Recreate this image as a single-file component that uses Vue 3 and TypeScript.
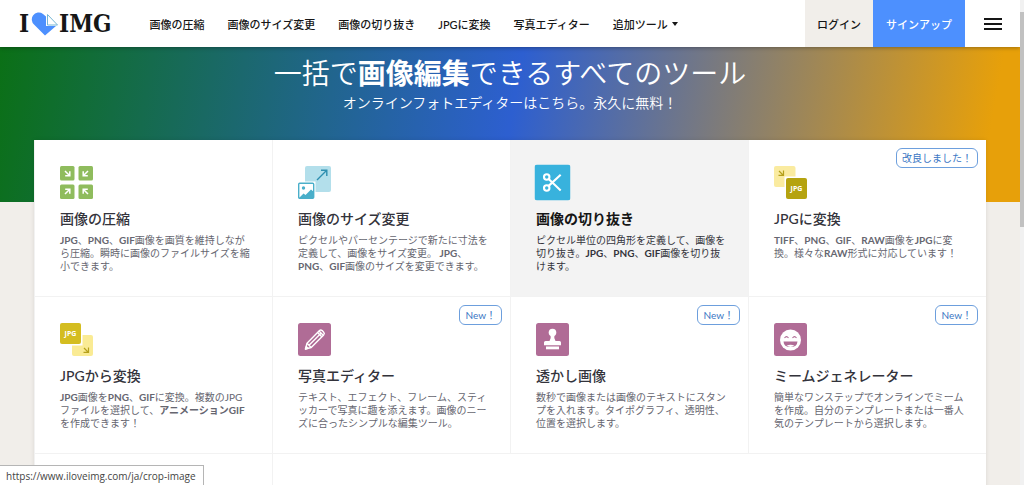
<script setup lang="ts">
interface Tool {
  icon: string
  title: string
  text: string
  badge?: string
  active?: boolean
}

interface Segment {
  text: string
  bold: boolean
}

const links: string[] = ['画像の圧縮', '画像のサイズ変更', '画像の切り抜き', 'JPGに変換', '写真エディター']

const tools: Tool[] = [
  {
    icon: 'compress',
    title: '画像の圧縮',
    text: '**JPG**、**PNG**、**GIF**画像を画質を維持しなが\nら圧縮。瞬時に画像のファイルサイズを縮\n小できます。',
  },
  {
    icon: 'resize',
    title: '画像のサイズ変更',
    text: 'ピクセルやパーセンテージで新たに寸法を\n定義して、画像をサイズ変更。 **JPG**、\n**PNG**、**GIF**画像のサイズを変更できます。',
  },
  {
    icon: 'crop',
    title: '画像の切り抜き',
    text: 'ピクセル単位の四角形を定義して、画像を\n切り抜き。**JPG**、**PNG**、**GIF**画像を切り抜\nけます。',
    active: true,
  },
  {
    icon: 'to-jpg',
    title: 'JPGに変換',
    text: '**TIFF**、**PNG**、**GIF**、**RAW**画像を**JPG**に変\n換。様々な**RAW**形式に対応しています！',
    badge: '改良しました！',
  },
  {
    icon: 'from-jpg',
    title: 'JPGから変換',
    text: '**JPG**画像を**PNG**、**GIF**に変換。複数のJPG\nファイルを選択して、**アニメーションGIF**\nを作成できます！',
  },
  {
    icon: 'editor',
    title: '写真エディター',
    text: 'テキスト、エフェクト、フレーム、スティ\nッカーで写真に趣を添えます。画像のニー\nズに合ったシンプルな編集ツール。',
    badge: 'New！',
  },
  {
    icon: 'watermark',
    title: '透かし画像',
    text: '数秒で画像または画像のテキストにスタン\nプを入れます。タイポグラフィ、透明性、\n位置を選択します。',
    badge: 'New！',
  },
  {
    icon: 'meme',
    title: 'ミームジェネレーター',
    text: '簡単なワンステップでオンラインでミーム\nを作成。自分のテンプレートまたは一番人\n気のテンプレートから選択します。',
    badge: 'New！',
  },
]

function segments(text: string): Segment[] {
  return text
    .split('**')
    .map((part, index) => ({ text: part, bold: index % 2 === 1 }))
    .filter((part) => part.text !== '')
}
</script>

<template>
  <div class="page">
    <header class="header">
      <a href="#" class="logo" aria-label="I love IMG">
        <span>I</span>
        <svg class="heart" viewBox="0 0 28 24" aria-hidden="true">
          <path d="M14 23.500 3 12.500A7 7 0 0 1 2 3.500 7 7 0 0 1 12 2L15 4.500 15 14 25 14Z" fill="#4d90fe" />
          <path d="M16.500 2.500V13H26.500Z" fill="#fff" stroke="#76b6d4" stroke-width="1" stroke-linejoin="round" />
        </svg>
        <span>IMG</span>
      </a>
      <nav class="nav">
        <a v-for="link in links" :key="link" href="#">{{ link }}</a>
        <button type="button" class="more">追加ツール<span class="caret"></span></button>
      </nav>
      <div class="account">
        <a href="#" class="login">ログイン</a>
        <a href="#" class="signup">サインアップ</a>
        <button type="button" class="menu" aria-label="メニュー">
          <span></span><span></span><span></span>
        </button>
      </div>
    </header>

    <main class="main">
      <section class="hero">
        <h1>一括で<strong>画像編集</strong>できるすべてのツール</h1>
        <p>オンラインフォトエディターはこちら。永久に無料！</p>
      </section>

      <section class="tools">
        <a v-for="tool in tools" :key="tool.title" href="#" class="tool" :class="{ active: tool.active }">
          <svg class="icon" viewBox="0 0 33 33" aria-hidden="true">
            <template v-if="tool.icon === 'compress'">
              <g fill="#8fbc5d">
                <rect width="14.500" height="14.500" rx="1.500" />
                <rect x="18.500" width="14.500" height="14.500" rx="1.500" />
                <rect y="18.500" width="14.500" height="14.500" rx="1.500" />
                <rect x="18.500" y="18.500" width="14.500" height="14.500" rx="1.500" />
              </g>
              <g fill="none" stroke="#fff" stroke-width="1.500">
                <path d="M5 5 9.500 9.500M9.800 5.200V9.800H5.200" />
                <path d="M28 5 23.500 9.500M23.200 5.200V9.800H27.800" />
                <path d="M5 28 9.500 23.500M9.800 27.800V23.200H5.200" />
                <path d="M28 28 23.500 23.500M23.200 27.800V23.200H27.800" />
              </g>
            </template>
            <template v-else-if="tool.icon === 'resize'">
              <rect x="7" width="26" height="26" rx="2" fill="#b3dfeb" />
              <path d="M19 14 28.500 4.500M23 4.200H28.800V10" fill="none" stroke="#2e8fb0" stroke-width="1.400" />
              <rect x="-1" y="15.500" width="18.500" height="18.500" fill="#fff" />
              <rect x=".7" y="17.200" width="15" height="15" rx="1" fill="#fff" stroke="#4aafca" stroke-width="1.400" />
              <circle cx="5.500" cy="22" r="1.700" fill="#4aafca" />
              <path d="M1 32 5.500 27.500 7.500 29 13 23.500 16 26V32Z" fill="#4aafca" />
            </template>
            <template v-else-if="tool.icon === 'crop'">
              <rect width="33" height="33" rx="2.500" fill="#38b2dd" />
              <g fill="none" stroke="#fff" stroke-width="1.900">
                <circle cx="11.200" cy="11.500" r="2.500" />
                <circle cx="11.200" cy="21.500" r="2.500" />
                <path d="M13 13.400 24 23.800M13 19.600 24 9.400" />
              </g>
            </template>
            <template v-else-if="tool.icon === 'to-jpg'">
              <rect width="21.500" height="21" rx="2" fill="#faeba0" />
              <path d="M5 5 9 9M9.500 4.500V9.300H4.500" fill="none" stroke="#b5a01b" stroke-width="1.200" />
              <rect x="10.500" y="10.500" width="23" height="23" fill="#fff" />
              <rect x="12" y="12" width="21" height="21" rx="2" fill="#b5a30f" />
              <text x="22.500" y="25" class="jpg">JPG</text>
            </template>
            <template v-else-if="tool.icon === 'from-jpg'">
              <rect x="12" y="12" width="21" height="21" rx="2" fill="#faeb94" />
              <path d="M24 25 28 29M28.500 24.500V29.300H23.500" fill="none" stroke="#b5a01b" stroke-width="1.200" />
              <rect x="-1" y="-1" width="23.500" height="23.500" fill="#fff" />
              <rect width="21" height="21" rx="2" fill="#d4bd20" />
              <text x="10.500" y="13.200" class="jpg">JPG</text>
            </template>
            <template v-else>
              <rect width="33" height="33" rx="2.500" fill="#b06c96" />
              <g v-if="tool.icon === 'editor'" fill="none" stroke="#fff" stroke-width="1.400" stroke-linejoin="round">
                <path d="M7.500 26 9 20.300 21.500 7.500Q22.800 6.500 24.200 7.600L25.700 9.200Q26.900 10.500 25.700 11.900L13.200 24.500Z" />
                <path d="M9 20.300 13.200 24.500M11 22.200 23.500 9.700M19.500 9.500 23.800 13.800M21 8 25.200 12.200" />
                <path d="M7.500 26 8.200 23.600 9.800 25.300Z" fill="#fff" />
              </g>
              <g v-else-if="tool.icon === 'watermark'" fill="#fff">
                <circle cx="16.500" cy="9.500" r="3.800" />
                <path d="M14.500 11H18.500L18.300 15 19.500 18H23.500Q25 18 25 19.500V22.300H8V19.500Q8 18 9.500 18H13.500L14.700 15Z" />
                <rect x="10" y="23.500" width="13" height="2.800" />
              </g>
              <g v-else>
                <circle cx="16.500" cy="17" r="10.500" fill="#fff" />
                <path d="M9.500 18.500H23.500Q23.200 24 16.500 24T9.500 18.500Z" fill="#b06c96" />
                <path d="M12.500 22.800Q16.500 20.500 20.500 22.800 16.500 25 12.500 22.800Z" fill="#fff" />
                <path d="M10.500 15Q12.500 12.300 14.500 15M18.500 15Q20.500 12.300 22.500 15" fill="none" stroke="#b06c96" stroke-width="1.100" />
              </g>
            </template>
          </svg>
          <h2>{{ tool.title }}</h2>
          <p>
            <template v-for="(part, index) in segments(tool.text)" :key="index"><strong v-if="part.bold">{{ part.text }}</strong><template v-else>{{ part.text }}</template></template>
          </p>
          <span v-if="tool.badge" class="badge">{{ tool.badge }}</span>
        </a>
        <div class="tool"></div>
        <div class="tool wide"></div>
      </section>
    </main>

    <div class="scrollbar" aria-hidden="true"><div class="thumb"></div></div>
    <div class="status">https://www.iloveimg.com/ja/crop-image</div>
  </div>
</template>

<style>
body {
  margin: 0;
  background: #f1eeea;
}
</style>

<style scoped>
.page {
  position: relative;
  height: 100vh;
  overflow: hidden;
  box-sizing: border-box;
  padding-right: 4px;
  color: #33333b;
  font-family: Lato, "Noto Sans CJK JP", sans-serif;
  font-size: 11px;
}

a {
  color: inherit;
  text-decoration: none;
}

button {
  padding: 0;
  border: 0;
  background: none;
  color: inherit;
  font: inherit;
}

.header {
  position: relative;
  z-index: 1;
  display: flex;
  align-items: stretch;
  height: 47px;
  background: #fff;
  box-shadow: 0 1px 4px rgba(0, 0, 0, 0.3);
  color: #161616;
  font-weight: 500;
  white-space: nowrap;
}

.logo {
  display: flex;
  align-items: center;
  margin: 0 38px 0 19px;
  font: bold 24px "DejaVu Serif Condensed", "DejaVu Serif", serif;
}

.heart {
  width: 28px;
  height: 24px;
  margin: 0 0 0 2px;
}

.nav {
  display: flex;
  align-items: center;
  gap: 23px;
}

.more {
  display: flex;
  align-items: center;
  gap: 4px;
}

.caret {
  border: 3px solid transparent;
  border-top: 4px solid #161616;
  border-bottom: 0;
}

.account {
  display: flex;
  margin-left: auto;
}

.login,
.signup {
  display: flex;
  align-items: center;
  padding: 0 12px;
  background: #f1eeea;
}

.signup {
  padding: 0 13px;
  background: #4d90fe;
  color: #fff;
}

.menu {
  display: flex;
  flex-direction: column;
  align-items: center;
  justify-content: center;
  gap: 3px;
  width: 55px;
}

.menu span {
  width: 18px;
  height: 2px;
  background: #161616;
}

.main {
  background: linear-gradient(100deg, #0b7016 0%, #2d5fd0 50%, #e7a00a 96%) no-repeat 0 0 / 100% 155px;
}

.hero {
  height: 93px;
  box-sizing: border-box;
  padding-top: 8px;
  color: #fff;
  text-align: center;
}

h1 {
  margin: 0;
  font-size: 28px;
  font-weight: 350;
  line-height: 36px;
}

h1 strong {
  font-weight: 700;
}

.hero p {
  margin: 2px 0 0;
  font-size: 14px;
  font-weight: 350;
  line-height: 20px;
}

.tools {
  display: grid;
  grid-template-columns: repeat(4, 1fr);
  grid-auto-rows: minmax(157px, auto);
  margin: 0 34px;
  background: #fff;
  box-shadow: 0 0 4px rgba(0, 0, 0, 0.1);
}

.tool {
  position: relative;
  box-sizing: border-box;
  padding: 26px 20px 20px 25px;
  border-left: 1px solid #f2f2f2;
  border-bottom: 1px solid #f2f2f2;
}

.wide {
  grid-column: span 3;
}

.active {
  background: #f3f3f3;
  color: #161616;
}

.icon {
  display: block;
  width: 33px;
  height: 33px;
}

.active .icon {
  transform: scale(1.09);
}

.jpg {
  fill: #fff;
  font: bold 7px "Open Sans", sans-serif;
  text-anchor: middle;
}

h2 {
  margin: 10px 0 5px;
  font-size: 14px;
  font-weight: 500;
  line-height: 20px;
}

.active h2 {
  font-weight: 700;
}

.tool p {
  margin: 0;
  color: #666670;
  font-size: 10px;
  line-height: 13px;
  white-space: pre-line;
}

.active p {
  color: #33333b;
}

.badge {
  position: absolute;
  top: 8px;
  right: 8px;
  padding: 0 5px;
  border: 1px solid #6d9fdd;
  border-radius: 6px;
  background: #fff;
  color: #3c77c4;
  font-size: 10px;
  line-height: 18px;
}

.scrollbar {
  position: absolute;
  top: 0;
  right: 0;
  bottom: 0;
  z-index: 2;
  width: 4px;
  box-sizing: border-box;
  padding-top: 12px;
  background: #f1f1f1;
}

.thumb {
  height: 215px;
  background: #c1c1c1;
}

.status {
  position: absolute;
  bottom: 0;
  left: 0;
  z-index: 2;
  padding: 2px 7px 1px 6px;
  border: 1px solid #b5b5b5;
  border-bottom: 0;
  border-left: 0;
  background: #fff;
  color: #444;
  font: 10px/16px "Open Sans", sans-serif;
}
</style>
